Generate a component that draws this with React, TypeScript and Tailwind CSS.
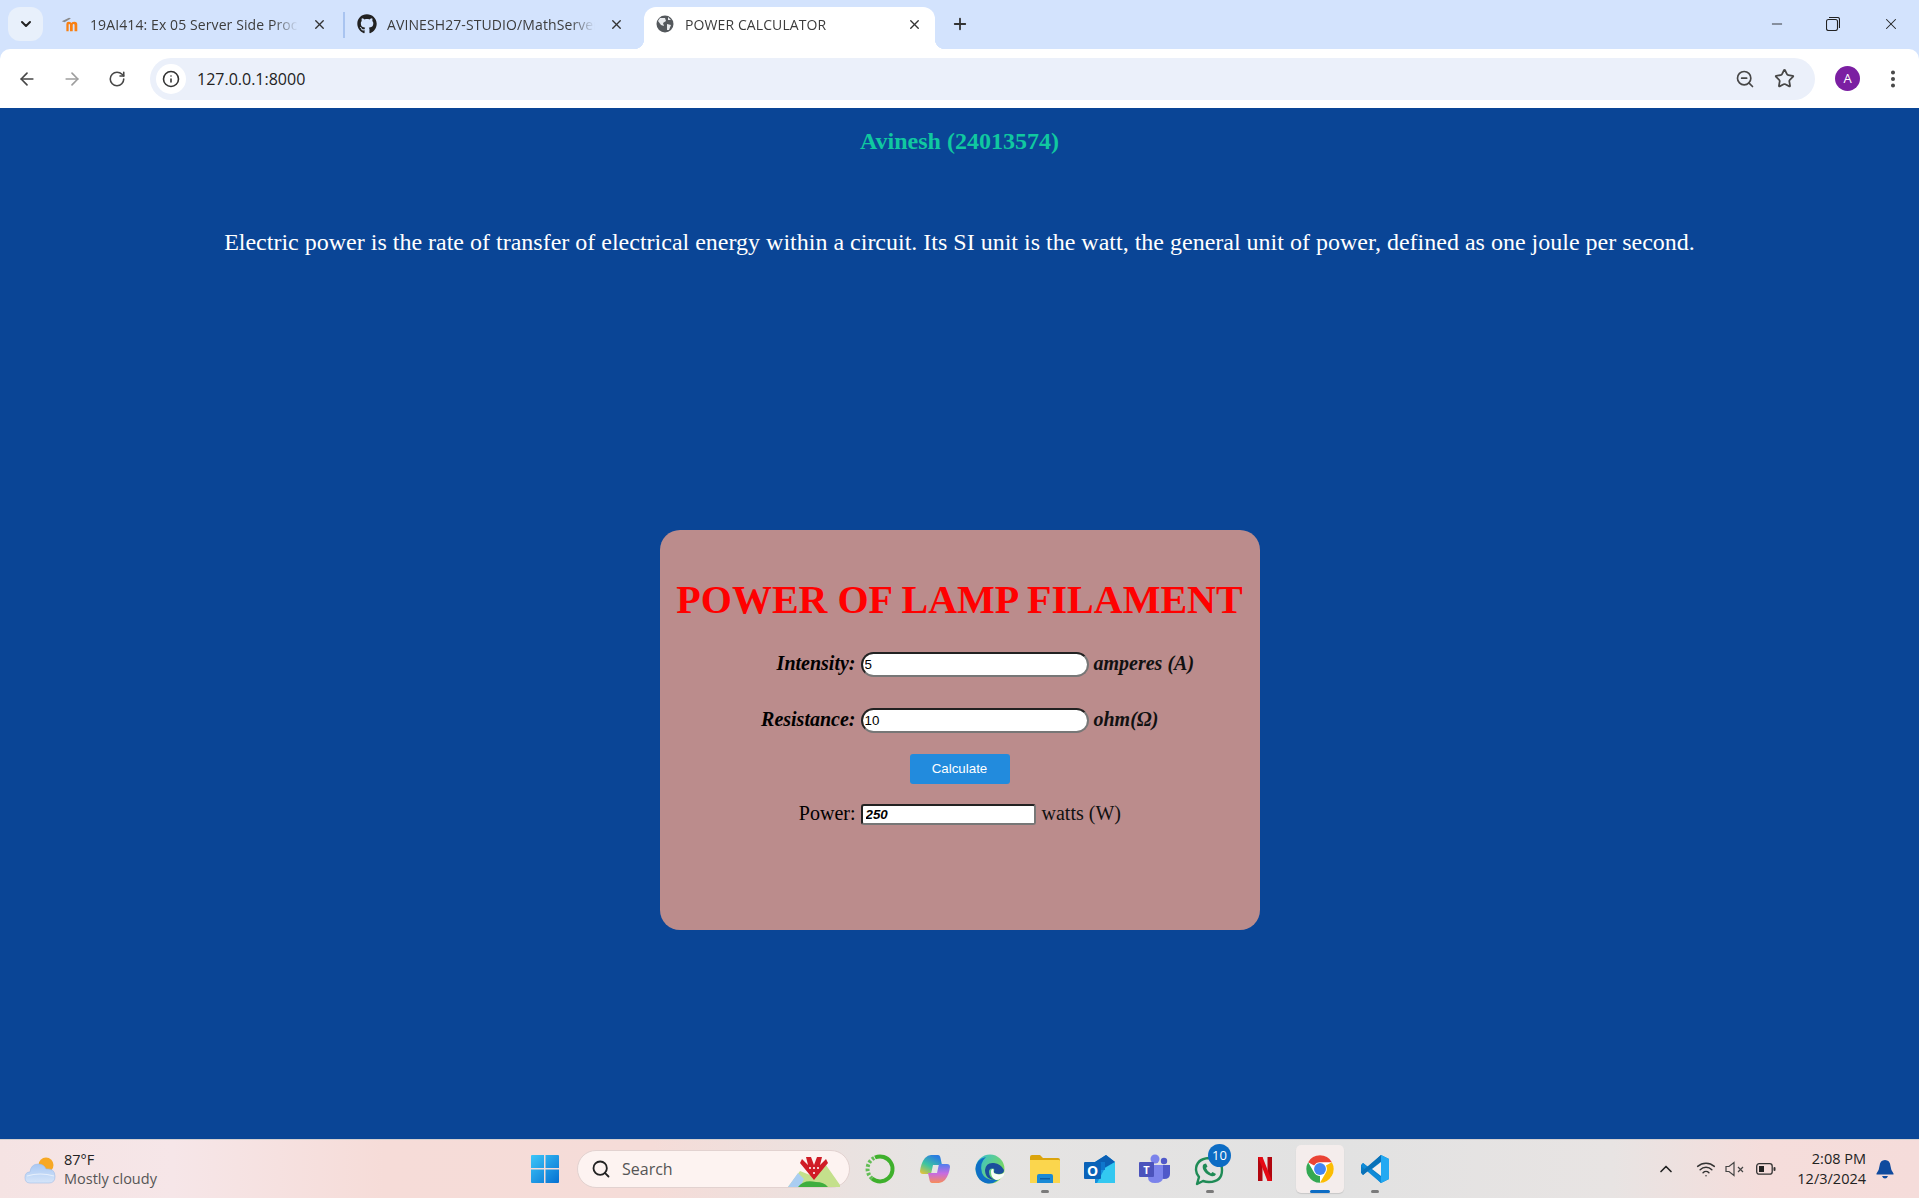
import React from "react";
import { ArrowLeft, ArrowRight, RotateCw, Info, ZoomOut, Star, X, Plus, ChevronDown, ChevronUp, Minus, Wifi, EllipsisVertical, Search } from "lucide-react";
import { FaGithub } from "react-icons/fa";

const ui = "font-['Open_Sans','Noto_Sans',sans-serif]";

function Tab({ icon, title, active, className = "" }: { icon: React.ReactNode; title: string; active?: boolean; className?: string }) {
  return (
    <div className={`relative flex items-center h-[42px] pb-[8px] ${active ? "bg-white rounded-t-[12px]" : ""} ${className}`}>
      {active && <div className="absolute left-[-10px] bottom-0 w-[10px] h-[10px] bg-[radial-gradient(circle_at_0_0,transparent_10px,white_10.5px)]" />}
      {active && <div className="absolute right-[-10px] bottom-0 w-[10px] h-[10px] bg-[radial-gradient(circle_at_100%_0,transparent_10px,white_10.5px)]" />}
      <div className="w-[20px] h-[20px] shrink-0 flex items-center justify-center">{icon}</div>
      <div className="ml-[10px] flex-1 overflow-hidden whitespace-nowrap text-[14px] tracking-[0.1px] text-[#3c3c3c] [mask-image:linear-gradient(90deg,#000_88%,transparent)]">{title}</div>
      <X size={15} strokeWidth={2.2} className="ml-[14px] text-[#333] shrink-0" />
    </div>
  );
}

function Moodle() {
  return (
    <svg width="22" height="18" viewBox="0 0 22 18">
      <path d="M2 6 L10 2 L12 3 L5 7 Z" fill="#8a8a8a" />
      <path d="M7 17 V9 Q7 6.5 9.5 6.5 Q11.5 6.5 12.5 8 Q13.5 6.5 16 6.5 Q19 6.5 19 9.5 V17 H16 V10 Q16 9 15 9 Q14 9 14 10 V17 H11 V10 Q11 9 10 9 Q9.5 9 9.5 10 V17 Z" fill="#f98012" />
    </svg>
  );
}

function Globe() {
  return (
    <svg width="18" height="18" viewBox="0 0 18 18">
      <circle cx="9" cy="9" r="8.5" fill="#54585c" />
      <path d="M4 3 L9 3 L10 6 L7 8 L8 11 L5 10 L2 6 Z M11 9 L15 10 L13 15 L11 15 Z M12 2 L15 5 L12 5 Z" fill="#e8eaed" />
    </svg>
  );
}

function WeatherIcon() {
  return (
    <svg width="32" height="28" viewBox="0 0 32 28">
      <defs>
        <linearGradient id="wc" x1="0" y1="0" x2="0" y2="1">
          <stop offset="0" stopColor="#a9c8f3" />
          <stop offset="1" stopColor="#d6e5f9" />
        </linearGradient>
      </defs>
      <circle cx="22" cy="9" r="7.500" fill="#f7a823" />
      <path d="M6 27 Q1 27 1 21.500 Q1 16 6 16 Q7 8 14 8 Q20 8 22 13 Q31 12 31 20.500 Q31 27 25 27 Z" fill="url(#wc)" stroke="#9dbce8" strokeWidth="0.6" />
      <path d="M3 20 Q16 16 30 20" fill="none" stroke="#e6effb" strokeWidth="1.200" />
    </svg>
  );
}

function WinLogo() {
  return (
    <svg width="30" height="30" viewBox="0 0 30 30">
      <defs>
        <linearGradient id="wl" x1="0" y1="0" x2="1" y2="1">
          <stop offset="0" stopColor="#3dc6f8" />
          <stop offset="1" stopColor="#0570d2" />
        </linearGradient>
      </defs>
      <path d="M1 2 Q1 1 2 1 H14 V14 H1 Z M15.500 1 H28 Q29 1 29 2 V14 H15.500 Z M1 15.500 H14 V29 H2 Q1 29 1 28 Z M15.500 15.500 H29 V28 Q29 29 28 29 H15.500 Z" fill="url(#wl)" />
    </svg>
  );
}

function SearchArt() {
  return (
    <svg width="52" height="32" viewBox="0 0 52 32">
      <path d="M0 32 L12 16 L22 20 L38 10 L52 30 L52 32 Z" fill="#c4e08c" />
      <path d="M0 32 L10 18 L16 24 L12 32 Z" fill="#a9cdf2" />
      <path d="M10 32 Q16 24 28 27 Q36 27 40 32 Z" fill="#3fae3f" />
      <path d="M26 25 L12 8 L14 4 L20 10 L18 2 L23 2 L26 10 L29 2 L34 2 L32 10 L38 4 L40 8 Z" fill="#d01c26" />
      <circle cx="26" cy="13" r="1" fill="#fff" />
      <circle cx="22" cy="13" r="1" fill="#fff" />
      <circle cx="30" cy="13" r="1" fill="#fff" />
      <circle cx="26" cy="18" r="1" fill="#fff" />
    </svg>
  );
}

function RingApp() {
  return (
    <svg width="32" height="32" viewBox="0 0 32 32" fill="none">
      <path d="M11 4.500 A12.500 12.500 0 1 1 8 25.500" stroke="#3fb02c" strokeWidth="4" />
      <path d="M8 25.500 A12.500 12.500 0 0 1 11 4.500" stroke="#62bd55" strokeWidth="4" strokeDasharray="2.500 1.800" />
    </svg>
  );
}

function Copilot() {
  return (
    <svg width="32" height="32" viewBox="0 0 32 32">
      <defs>
        <linearGradient id="c1" x1="0" y1="1" x2="0.6" y2="0">
          <stop offset="0" stopColor="#f7c22e" />
          <stop offset="0.5" stopColor="#3ec5a0" />
          <stop offset="1" stopColor="#2a7de1" />
        </linearGradient>
        <linearGradient id="c2" x1="0.5" y1="0" x2="0.5" y2="1">
          <stop offset="0" stopColor="#4f7fef" />
          <stop offset="0.5" stopColor="#c76be0" />
          <stop offset="1" stopColor="#f78c5a" />
        </linearGradient>
      </defs>
      <path d="M12 2 H19 Q21 2 21.500 5 L23 12 H14 L12 21 H4 Q1 21 1 18 Q2 10 6 5 Q9 2 12 2 Z" fill="url(#c1)" />
      <path d="M20 30 H13 Q11 30 10.500 27 L9 20 H18 L20 11 H28 Q31 11 31 14 Q30 22 26 27 Q23 30 20 30 Z" fill="url(#c2)" />
    </svg>
  );
}

function Edge() {
  return (
    <svg width="32" height="32" viewBox="0 0 32 32">
      <defs>
        <linearGradient id="e1" x1="0" y1="0" x2="1" y2="0.6">
          <stop offset="0" stopColor="#33bfd9" />
          <stop offset="1" stopColor="#7ed957" />
        </linearGradient>
      </defs>
      <circle cx="16" cy="16" r="14.500" fill="url(#e1)" />
      <path d="M1.500 16 Q2 6 12 4 Q5 10 8 20 Q11 28 24 27 Q19 31 14 30.500 Q3 29 1.500 16 Z" fill="#0f6fc6" />
      <path d="M11 17 Q12 9 20 10 Q27 11 30 17 Q30 21 25 21 Q19 21 20 18 Q21 16 19 15.500 Q15 15 15 19 Q15 25 22 27 Q11 27 11 17 Z" fill="#1b4f9c" />
      <path d="M17 19 Q17 15.500 19 16 Q20 16.500 19.500 18 Q19 21 25 21.500 Q31 21 30.500 17 L30 22 Q27 27 22 27 Q17 25 17 19 Z" fill="#fff" opacity="0.95" />
    </svg>
  );
}

function Folder() {
  return (
    <svg width="32" height="30" viewBox="0 0 32 30">
      <path d="M1 3 Q1 1 3 1 H11 L14 4 H29 Q31 4 31 6 V8 H1 Z" fill="#dba40c" />
      <path d="M1 6 H30 Q31 6 31 7 V29 H1 Z" fill="#fbd64d" />
      <path d="M8 29 V22 Q8 20 10 20 H22 Q24 20 24 22 V29 Z" fill="#1a8ad6" />
      <rect x="11" y="24" width="10" height="1.500" fill="#0c5ea5" />
    </svg>
  );
}

function Outlook() {
  return (
    <div className="relative w-[32px] h-[30px]">
      <svg width="32" height="30" viewBox="0 0 32 30" className="absolute inset-0">
        <path d="M11 8 L22 1 L31 8 L31 28 Q31 29 30 29 H11 Z" fill="#1490df" />
        <path d="M11 8 L22 1 L31 8 L20 14 Z" fill="#0a5fb4" />
        <path d="M21 14 L31 8 V29 H13 Z" fill="#33c8f1" />
        <path d="M11 8 H21 V16 H11 Z" fill="#0e76cc" />
      </svg>
      <div className="absolute left-0 top-[8px] w-[17px] h-[17px] bg-[#0a62b8] flex items-center justify-center text-white text-[14px] font-bold font-['Open_Sans',sans-serif] leading-none rounded-[1px]">O</div>
    </div>
  );
}

function Teams() {
  return (
    <div className="relative w-[32px] h-[30px]">
      <svg width="32" height="30" viewBox="0 0 32 30" className="absolute inset-0">
        <circle cx="16" cy="5" r="4.500" fill="#7b83eb" />
        <circle cx="25" cy="7" r="3.200" fill="#5059c9" />
        <path d="M20 11 H31 V20 Q31 25 25 25 Q22 25 20 23 Z" fill="#5059c9" />
        <path d="M9 11 H24 V23 Q24 29 16 29 Q9 29 9 23 Z" fill="#7b83eb" />
      </svg>
      <div className="absolute left-0 top-[8px] w-[15px] h-[15px] bg-[#4b53bc] rounded-[1px] flex items-center justify-center text-white text-[11px] font-bold font-['Open_Sans',sans-serif] leading-none">T</div>
    </div>
  );
}

function WhatsApp() {
  return (
    <div className="relative w-[32px] h-[32px]">
      <svg width="30" height="32" viewBox="0 0 30 32" className="absolute left-0 top-[2px]">
        <path d="M3 29 L5 22 Q2 18 2 15 Q2 4 15 3 Q28 4 28 15 Q28 27 15 27 Q12 27 9 26 Z" fill="none" stroke="#1f8b56" strokeWidth="2.400" strokeLinejoin="round" />
        <path d="M10 9 Q8 10 9 14 Q11 19 17 21 Q21 22 22 19 L18.500 17 L17 18.500 Q13.500 17 12 13 L13.500 11.500 L12 8.500 Z" fill="#1f8b56" />
      </svg>
      <div className="absolute left-[14px] top-[-9px] w-[23px] h-[23px] rounded-full bg-[#0c6cc4] text-white text-[13px] flex items-center justify-center font-['Open_Sans',sans-serif] leading-none">10</div>
    </div>
  );
}

function Netflix() {
  return (
    <svg width="14" height="24" viewBox="0 0 14 24">
      <path d="M0 0 H4.500 V24 L0 24 Z" fill="#b1060f" />
      <path d="M9.500 0 H14 V24 H9.500 Z" fill="#b1060f" />
      <path d="M0 0 H4.500 L14 24 H9.500 Z" fill="#e50914" />
    </svg>
  );
}

function Chrome() {
  return (
    <svg width="30" height="30" viewBox="0 0 48 48">
      <circle cx="24" cy="24" r="22" fill="#fff" />
      <path d="M24 2 A22 22 0 0 1 43 13 H24 A11 11 0 0 0 14.500 18.500 L5 13 A22 22 0 0 1 24 2 Z" fill="#ea4335" />
      <path d="M43 13 A22 22 0 0 1 24 46 L33.500 29.500 A11 11 0 0 0 33.500 18.500 Z" fill="#fbbc04" />
      <path d="M24 46 A22 22 0 0 1 5 13 L14.500 29.500 A11 11 0 0 0 24 35 Z" fill="#34a853" />
      <circle cx="24" cy="24" r="9.500" fill="#4285f4" />
    </svg>
  );
}

function VSCode() {
  return (
    <svg width="30" height="30" viewBox="0 0 30 30">
      <path d="M21 1 L29 5 V25 L21 29 L8 16 L3 21 L1 19 V11 L3 9 L8 13 Z" fill="#0c7cc4" />
      <path d="M21 1 L29 5 V25 L21 29 Z" fill="#23a9f2" />
      <path d="M21 8 L12 15 L21 22 Z" fill="#f3efed" />
      <path d="M3 9 L21 23 V29 L1 12 Z" fill="#0f8bd8" />
      <path d="M3 21 L21 7 V1 L1 18 Z" fill="#0a72b8" />
    </svg>
  );
}

function TaskIcon({ children, running, active }: { children: React.ReactNode; running?: boolean; active?: boolean }) {
  return (
    <div className={`relative w-[48px] h-[48px] mr-[7px] flex items-center justify-center rounded-[5px] ${active ? "bg-[#f4edec] shadow-[0_1px_1px_rgba(0,0,0,0.12)]" : ""}`}>
      {children}
      {running && <div className="absolute bottom-[0px] left-1/2 -translate-x-1/2 w-[8px] h-[3px] rounded-full bg-[#7a7a7a]" />}
      {active && <div className="absolute bottom-[0px] left-1/2 -translate-x-1/2 w-[20px] h-[3px] rounded-full bg-[#0c6cc4]" />}
    </div>
  );
}

const inputFrame = "ml-[5px] bg-white border-2 border-t-[#222] border-l-[#222] border-b-[#777] border-r-[#777] outline-none text-black font-['Liberation_Sans',sans-serif] text-[13.33px]";

function Row({ label, labelClass, input, inputClass, suffix, suffixClass }: { label: string; labelClass: string; input: string; inputClass: string; suffix: string; suffixClass: string }) {
  return (
    <div className="flex items-center">
      <span className={`w-[196px] text-right text-[20px] leading-none text-black ${labelClass}`}>{label}</span>
      <input readOnly value={input} className={`${inputFrame} ${inputClass}`} />
      <span className={`ml-[5px] text-[20px] leading-none text-[#111] ${suffixClass}`}>{suffix}</span>
    </div>
  );
}

export default function App() {
  return (
    <div className="w-[1919px] h-[1198px] flex flex-col overflow-hidden bg-[#d3e3fd]">
      {/* tab strip */}
      <div className={`h-[49px] shrink-0 flex items-end relative ${ui}`}>
        <div className="absolute left-[8px] top-[7px] w-[35px] h-[34px] rounded-[12px] bg-[#e8f0fb] flex items-center justify-center">
          <ChevronDown size={16} strokeWidth={3} className="text-[#222]" />
        </div>
        <div className="ml-[45px] flex items-end">
          <Tab icon={<Moodle />} title="19AI414: Ex 05 Server Side Processing" className="w-[299px] pl-[15px] pr-[17px]" />
          <div className="w-[2px] h-[26px] bg-[#a9c4f0] mb-[11px] -ml-[1px]" />
          <Tab icon={<FaGithub size={20} className="text-[#222]" />} title="AVINESH27-STUDIO/MathServer" className="w-[299px] pl-[12px] pr-[20px]" />
          <Tab active icon={<Globe />} title="POWER CALCULATOR" className="w-[291px] pl-[11px] pr-[13px]" />
        </div>
        <Plus size={18} strokeWidth={2.4} className="ml-[16px] mb-[16px] text-[#333]" />
        <div className="flex-1" />
        <Minus size={16} strokeWidth={1.3} className="mb-[17px] mr-[41px] text-[#222]" />
        <svg width="14" height="14" viewBox="0 0 14 14" className="mb-[18px] mr-[42px]" fill="none" stroke="#222" strokeWidth="1.1">
          <rect x="0.500" y="2.500" width="11" height="11" rx="2" />
          <path d="M3 0.500 H11.500 Q13.500 0.500 13.500 2.500 V11" />
        </svg>
        <X size={18} strokeWidth={1.4} className="mb-[16px] mr-[19px] text-[#222]" />
      </div>

      {/* toolbar */}
      <div className={`h-[59px] shrink-0 bg-white rounded-t-[10px] flex items-center pl-[17px] relative ${ui}`}>
        <ArrowLeft size={20} strokeWidth={2} className="text-[#474747]" />
        <ArrowRight size={20} strokeWidth={2} className="ml-[25px] text-[#9e9e9e]" />
        <RotateCw size={18} strokeWidth={2.1} className="ml-[26px] text-[#474747]" />
        <div className="ml-[24px] w-[1665px] h-[42px] rounded-full bg-[#ebf0fa] flex items-center pl-[6px] pr-[20px]">
          <div className="w-[30px] h-[30px] rounded-full bg-white flex items-center justify-center">
            <Info size={18} strokeWidth={2.1} className="text-[#333]" />
          </div>
          <span className="ml-[11px] text-[16px] text-[#222]">127.0.0.1:8000</span>
          <div className="flex-1" />
          <ZoomOut size={20} strokeWidth={2} className="text-[#474747]" />
          <Star size={21} strokeWidth={2} className="ml-[19px] text-[#474747]" />
        </div>
        <div className="ml-[20px] w-[25px] h-[25px] rounded-full bg-[#7b1fa2] text-white text-[13px] flex items-center justify-center">A</div>
        <EllipsisVertical size={22} strokeWidth={2.4} className="ml-[22px] text-[#474747]" />
      </div>

      {/* page */}
      <main className="flex-1 bg-[#0a4596] flex flex-col items-center font-['Liberation_Serif','Times_New_Roman',serif]">
        <h2 className="mt-[20px] text-[24px] leading-[27px] font-bold text-[#10c8a0]">Avinesh (24013574)</h2>
        <p className="mt-[74px] text-[24px] leading-[27px] text-white">Electric power is the rate of transfer of electrical energy within a circuit. Its SI unit is the watt, the general unit of power, defined as one joule per second.</p>
        <div className="mt-[274px] w-[600px] h-[400px] bg-[#bb8c8c] rounded-[20px] flex flex-col">
          <h1 className="mt-[46px] text-center text-[40px] leading-[48px] font-bold text-[#ff0000]">POWER OF LAMP FILAMENT</h1>
          <div className="mt-[28px]">
            <Row label="Intensity:" labelClass="font-bold italic pb-[4px]" input="5" inputClass="w-[228px] h-[25px] rounded-full pl-[2px]" suffix="amperes (A)" suffixClass="font-bold italic pb-[4px]" />
          </div>
          <div className="mt-[31px]">
            <Row label="Resistance:" labelClass="font-bold italic pb-[4px]" input="10" inputClass="w-[228px] h-[25px] rounded-full pl-[2px]" suffix="ohm(Ω)" suffixClass="font-bold italic pb-[4px]" />
          </div>
          <button className="mt-[21px] self-center w-[100px] h-[30px] rounded-[3px] bg-[#228bdd] text-white text-[13.33px] font-['Liberation_Sans',sans-serif]">Calculate</button>
          <div className="mt-[19px]">
            <Row label="Power:" labelClass="pb-[2px]" input="250" inputClass="w-[175px] h-[21px] rounded-[3px] pl-[3px] font-bold italic" suffix="watts (W)" suffixClass="pb-[2px] ml-[6px]" />
          </div>
        </div>
      </main>

      {/* taskbar */}
      <footer className={`h-[59px] shrink-0 border-t border-[#d5cfcf] bg-[linear-gradient(90deg,#f5e3e3_0%,#f6e6e8_9%,#f6dcd8_20%,#f5dcd8_34%,#e6e4e3_48%,#e2e2e2_70%,#e8e4e3_84%,#f5dddb_92%,#f5dcda_100%)] flex items-center ${ui}`}>
        <div className="ml-[24px] mt-[2px]"><WeatherIcon /></div>
        <div className="ml-[8px] w-[100px] text-[14.5px] leading-[19px]">
          <div className="text-[#222]">87°F</div>
          <div className="text-[#555]">Mostly cloudy</div>
        </div>
        <div className="ml-[366px]"><WinLogo /></div>
        <div className="ml-[17px] w-[273px] h-[38px] rounded-full bg-[#fdf3f1] border border-[#e2d2d0] flex items-center pl-[13px] relative">
          <Search size={20} strokeWidth={2.2} className="text-[#222]" />
          <span className="ml-[11px] text-[16px] text-[#555]">Search</span>
          <div className="absolute right-[9px] bottom-0"><SearchArt /></div>
        </div>
        <div className="ml-[6px] flex items-center">
          <TaskIcon><RingApp /></TaskIcon>
          <TaskIcon><Copilot /></TaskIcon>
          <TaskIcon><Edge /></TaskIcon>
          <TaskIcon running><Folder /></TaskIcon>
          <TaskIcon><Outlook /></TaskIcon>
          <TaskIcon><Teams /></TaskIcon>
          <TaskIcon running><WhatsApp /></TaskIcon>
          <TaskIcon><Netflix /></TaskIcon>
          <TaskIcon active><Chrome /></TaskIcon>
          <TaskIcon running><VSCode /></TaskIcon>
        </div>
        <div className="flex-1" />
        <ChevronUp size={20} strokeWidth={2} className="text-[#222]" />
        <Wifi size={20} strokeWidth={1.8} className="ml-[20px] text-[#333]" />
        <svg width="20" height="16" viewBox="0 0 20 16" className="ml-[9px]" fill="none" stroke="#444" strokeWidth="1.2">
          <path d="M1 5.500 H4 L9 1.500 V14.500 L4 10.500 H1 Z" />
          <path d="M13 6 L18 11 M18 6 L13 11" />
        </svg>
        <svg width="20" height="14" viewBox="0 0 20 14" className="ml-[11px]" fill="none">
          <rect x="0.700" y="1.700" width="15.500" height="10.500" rx="2.500" stroke="#333" strokeWidth="1.300" />
          <rect x="3" y="4" width="5" height="6" fill="#222" />
          <rect x="17.500" y="5" width="2" height="4" rx="1" fill="#333" />
        </svg>
        <div className="ml-[21px] text-right text-[14.5px] leading-[20px] text-[#222]">
          <div>2:08 PM</div>
          <div>12/3/2024</div>
        </div>
        <svg width="18" height="20" viewBox="0 0 18 20" className="ml-[10px] mr-[25px]">
          <path d="M9 1 Q14 1 14.500 7 Q15 12 17.500 14.500 V15.500 H0.500 V14.500 Q3 12 3.500 7 Q4 1 9 1 Z" fill="#0f4a9e" />
          <path d="M6 17 H12 Q11 19.500 9 19.500 Q7 19.500 6 17 Z" fill="#0f4a9e" />
        </svg>
      </footer>
    </div>
  );
}
